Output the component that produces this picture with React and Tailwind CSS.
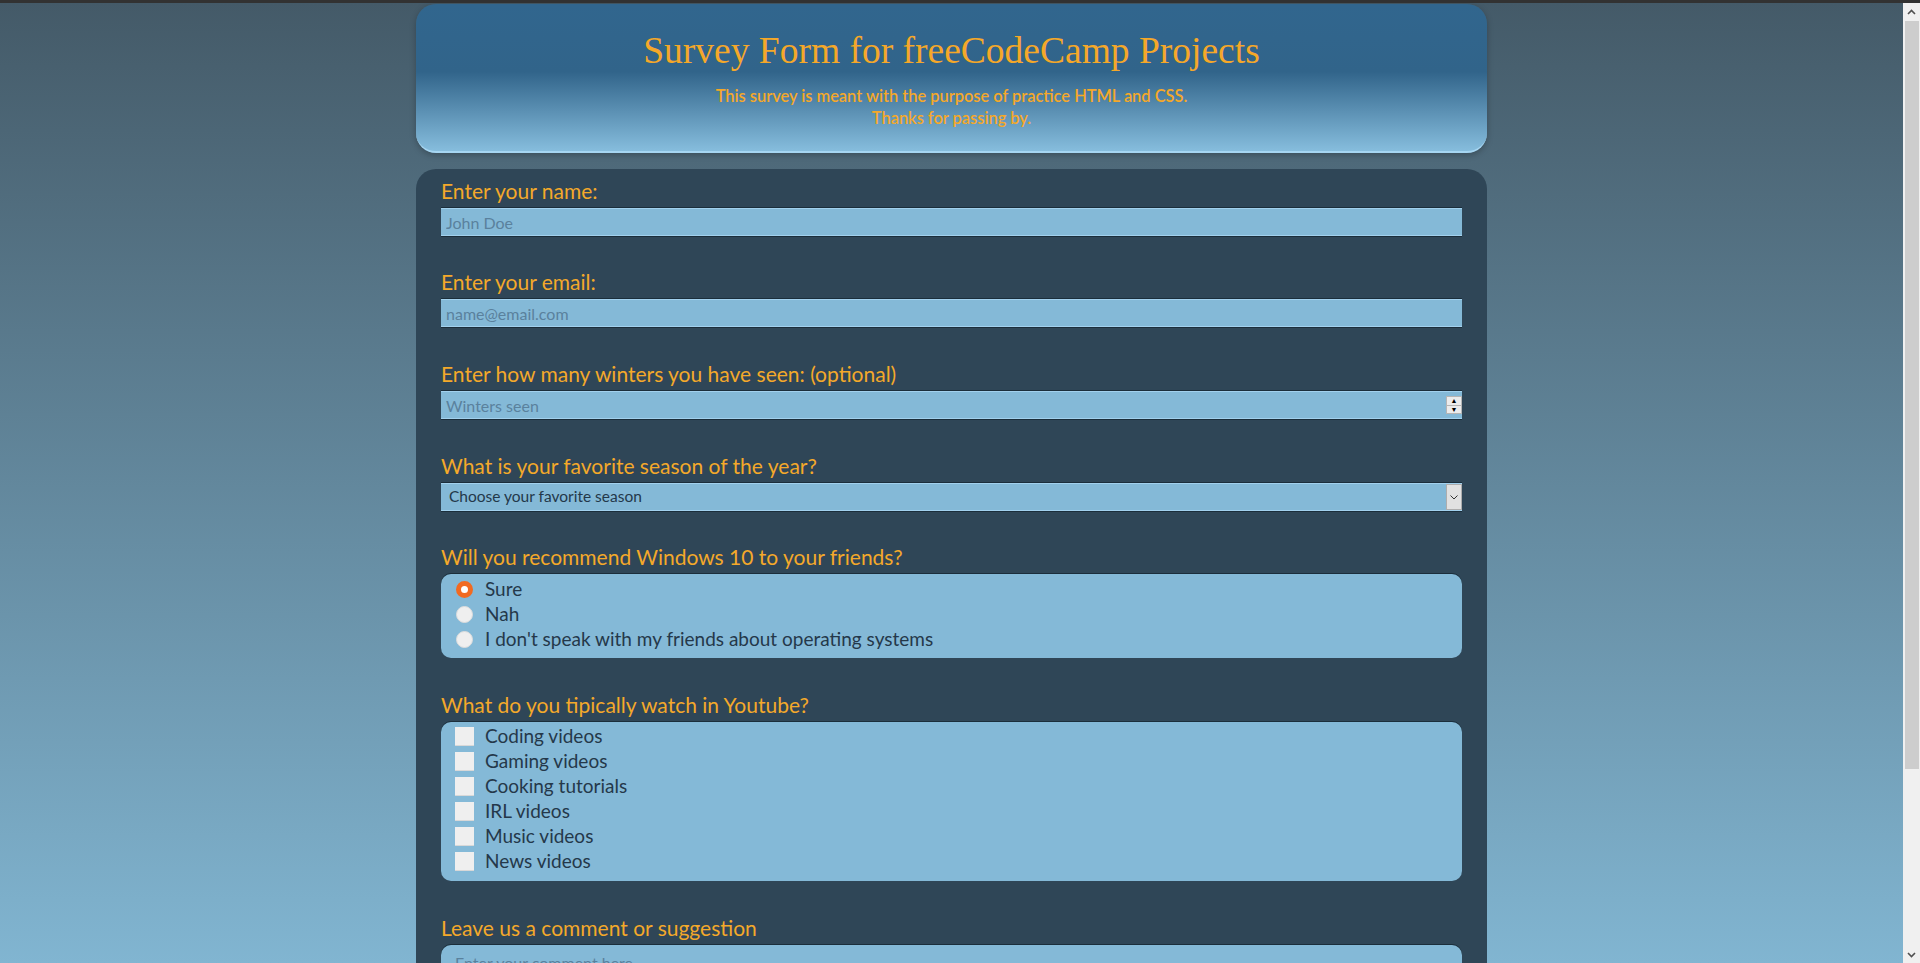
import React from "react"

const labelCls =
  "block text-[21px] leading-[24px] text-[#f4a92a] font-['Lato','Noto_Sans',sans-serif]"
const fieldCls =
  "block w-full h-[28px] mt-[5px] bg-[#84b9d7] border-y border-[#a2d1ee] shadow-[0_-1px_0_#1b2e3b,0_1px_0_#1b2e3b] outline-none px-[5px] text-[16px] text-[#23384a] placeholder:text-[#5a819d] font-['Lato','Noto_Sans',sans-serif]"

function Radio({ checked }) {
  return checked ? (
    <span className="w-[17px] h-[17px] rounded-full border-[5px] border-[#f26a21] bg-white shrink-0" />
  ) : (
    <span className="w-[17px] h-[17px] rounded-full bg-[#efefef] border border-[#dcdcdc] shrink-0" />
  )
}

function Chevron({ up }) {
  return (
    <svg width="9" height="6" viewBox="0 0 9 6" className="block">
      <path
        d={up ? "M1 5 L4.5 1.5 L8 5" : "M1 1 L4.5 4.5 L8 1"}
        fill="none"
        stroke="#505050"
        strokeWidth="1.6"
      />
    </svg>
  )
}

function Scrollbar() {
  return (
    <div className="w-[17px] shrink-0 bg-[#f0f0f0] flex flex-col">
      <div className="h-[17px] flex items-center justify-center">
        <Chevron up />
      </div>
      <div className="flex-1 pl-[2px] pr-px pt-px">
        <div className="h-[748px] bg-[#cdcdcd]" />
      </div>
      <div className="h-[17px] flex items-center justify-center">
        <Chevron />
      </div>
    </div>
  )
}

const seasons = ["Spring", "Summer", "Autumn", "Winter"]
const radios = [
  { label: "Sure", checked: true },
  { label: "Nah" },
  { label: "I don't speak with my friends about operating systems" },
]
const videos = [
  "Coding videos",
  "Gaming videos",
  "Cooking tutorials",
  "IRL videos",
  "Music videos",
  "News videos",
]

export default function App() {
  return (
    <div className="h-screen flex flex-col overflow-hidden bg-[#323232]">
      <div className="h-[3px] shrink-0 bg-[#323232]" />
      <div className="flex flex-1 min-h-0">
        <main className="flex-1 overflow-hidden bg-[linear-gradient(to_bottom,#445a68_0px,#81b5d1_960px)]">
          <div className="w-[1071px] mx-auto pt-px">
            <header className="h-[149px] rounded-[20px] border-b-2 border-[#a6d6f2] bg-[linear-gradient(to_bottom,#31668e_0%,#31648a_46%,#86bddd_100%)] shadow-[0_2px_6px_rgba(0,0,0,0.25)] pt-[27px] text-center text-[#f5a829]">
              <h1 className="text-[37.5px] leading-[40px] font-normal font-['Liberation_Serif',serif]">
                Survey Form for freeCodeCamp Projects
              </h1>
              <p className="mt-[14px] text-[16.4px] leading-[22px] font-semibold font-['Lato','Noto_Sans',sans-serif]">
                This survey is meant with the purpose of practice HTML and CSS.
                <br />
                Thanks for passing by.
              </p>
            </header>

            <form
              id="survey-form"
              className="mt-[16px] rounded-[20px] bg-[#2f4657] px-[25px] pt-[10px] pb-[40px] flex flex-col gap-[34px]"
            >
              <div>
                <label className={labelCls} htmlFor="name">Enter your name:</label>
                <input id="name" type="text" placeholder="John Doe" className={fieldCls} />
              </div>

              <div>
                <label className={labelCls} htmlFor="email">Enter your email:</label>
                <input id="email" type="email" placeholder="name@email.com" className={fieldCls} />
              </div>

              <div className="mt-px">
                <label className={labelCls} htmlFor="number">
                  Enter how many winters you have seen: (optional)
                </label>
                <div className="relative">
                  <input id="number" type="text" placeholder="Winters seen" className={fieldCls} />
                  <div className="absolute right-0 top-[5px] w-[16px] h-[18px] bg-[#ececec] border border-[#b5b5b5] flex flex-col">
                    <div className="flex-1 flex items-center justify-center border-b border-[#b5b5b5] text-[7px] leading-none text-black">▲</div>
                    <div className="flex-1 flex items-center justify-center text-[7px] leading-none text-black">▼</div>
                  </div>
                </div>
              </div>

              <div className="mt-px">
                <label className={labelCls} htmlFor="dropdown">
                  What is your favorite season of the year?
                </label>
                <div className="relative">
                  <select
                    id="dropdown"
                    defaultValue=""
                    className={fieldCls + " appearance-none pl-[8px] !text-[15.5px] text-[#1f3040]"}
                  >
                    <option value="" disabled>Choose your favorite season</option>
                    {seasons.map((s) => (
                      <option key={s}>{s}</option>
                    ))}
                  </select>
                  <div className="absolute right-0 top-px w-[16px] h-[26px] bg-[#e1e1e1] border border-[#adadad] flex items-center justify-center pointer-events-none">
                    <svg width="8" height="5" viewBox="0 0 8 5">
                      <path d="M0.5 0.5 L4 4 L7.5 0.5" fill="none" stroke="#333" strokeWidth="1" />
                    </svg>
                  </div>
                </div>
              </div>

              <div>
                <p className={labelCls}>Will you recommend Windows 10 to your friends?</p>
                <div className="mt-[5px] rounded-[10px] bg-[#84b9d7] shadow-[0_-1px_0_#1b2e3b] pt-[3px] pb-[6px] pl-[15px] font-['Lato','Noto_Sans',sans-serif] text-[19px] text-[#24384a]">
                  {radios.map((r) => (
                    <label key={r.label} className="h-[25px] flex items-center gap-[12px]">
                      <Radio checked={r.checked} />
                      <span>{r.label}</span>
                    </label>
                  ))}
                </div>
              </div>

              <div className="mt-px">
                <p className={labelCls}>What do you tipically watch in Youtube?</p>
                <div className="mt-[5px] rounded-[10px] bg-[#84b9d7] shadow-[0_-1px_0_#1b2e3b] pt-[2px] pb-[7px] pl-[14px] font-['Lato','Noto_Sans',sans-serif] text-[19px] text-[#24384a]">
                  {videos.map((v) => (
                    <label key={v} className="h-[25px] flex items-center gap-[11px]">
                      <span className="w-[19px] h-[19px] bg-[#efefef] border-b border-[#d8d8d8] shrink-0" />
                      <span>{v}</span>
                    </label>
                  ))}
                </div>
              </div>

              <div className="mt-px">
                <label className={labelCls} htmlFor="comment">Leave us a comment or suggestion</label>
                <textarea
                  id="comment"
                  placeholder="Enter your comment here..."
                  className="block w-full h-[120px] mt-[5px] rounded-[10px] bg-[#84b9d7] shadow-[0_-1px_0_#1b2e3b] outline-none resize-none px-[14px] pt-[6px] text-[16px] text-[#23384a] placeholder:text-[#5a819d] font-['Lato','Noto_Sans',sans-serif]"
                />
              </div>
            </form>
          </div>
        </main>
        <Scrollbar />
      </div>
    </div>
  )
}
